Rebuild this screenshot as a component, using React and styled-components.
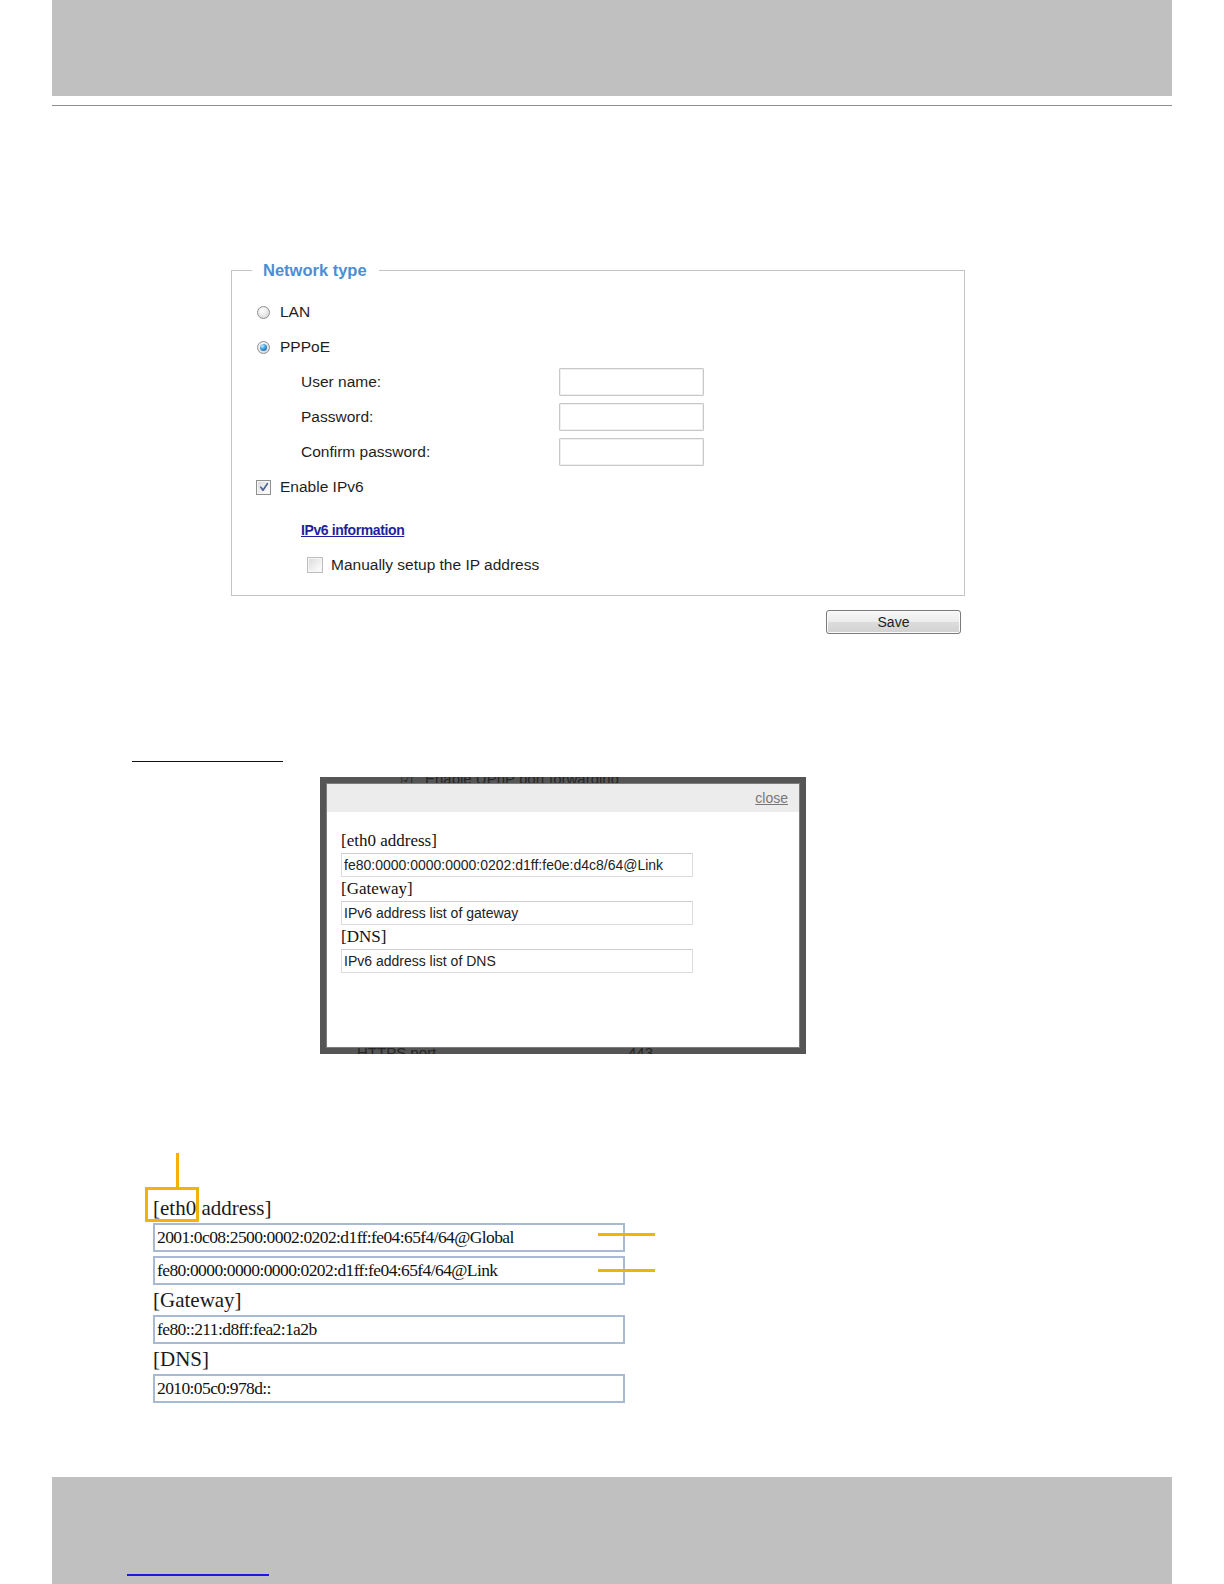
import React from 'react';
import styled, { createGlobalStyle } from 'styled-components';

const GlobalStyle = createGlobalStyle`
  html, body { margin: 0; padding: 0; background: #fff; }
  body { font-family: "Liberation Sans", Arial, sans-serif; color: #222; }
  * { box-sizing: border-box; }
`;

const Page = styled.div`
  width: 1224px;
  height: 1584px;
  display: flex;
  flex-direction: column;
  overflow: hidden;
`;

const Header = styled.div`
  flex-shrink: 0;
  margin: 0 52px;
  height: 96px;
  background: #c0c0c0;
`;

const Rule = styled.div`
  flex-shrink: 0;
  margin: 9px 52px 0;
  border-top: 1px solid #8f8f8f;
`;

const Settings = styled.section`
  flex-shrink: 0;
  margin: 154px 0 0 231px;
  width: 734px;
`;

const FieldSet = styled.fieldset`
  margin: 0;
  padding: 14.5px 0 13.5px;
  border: 1px solid #c4c4c4;
  min-width: 0;
`;

const Legend = styled.legend`
  margin-left: 20px;
  padding: 0 12px 0 11px;
  font-size: 16.5px;
  font-weight: bold;
  line-height: 20px;
  color: #4b8ed6;
`;

const Row = styled.div`
  height: ${(p) => p.$h || 35}px;
  display: flex;
  align-items: center;
  padding-left: ${(p) => p.$indent}px;
  margin-top: ${(p) => p.$mt || 0}px;
  font-size: 15.5px;
  color: #1e1e1e;
`;

const Radio = styled.span`
  flex-shrink: 0;
  width: 13px;
  height: 13px;
  border-radius: 50%;
  border: 1px solid #8e8f8f;
  background: radial-gradient(circle at 40% 35%, #ffffff 0%, #e6e6e6 55%, #cdcdcd 100%);
  margin-right: 10px;
  display: flex;
  align-items: center;
  justify-content: center;
  &::after {
    content: '';
    display: ${(p) => (p.$checked ? 'block' : 'none')};
    width: 7px;
    height: 7px;
    border-radius: 50%;
    background: radial-gradient(circle at 35% 30%, #c4f0ff 0%, #3d9bd8 45%, #17558f 100%);
  }
`;

const CheckBox = styled.span`
  flex-shrink: 0;
  width: ${(p) => p.$size}px;
  height: ${(p) => p.$size}px;
  border: 1px solid ${(p) => (p.$light ? '#bdbdbd' : '#8e8f8f')};
  background: linear-gradient(135deg, #d9d9d9 0%, #f2f2f2 60%, #ffffff 100%);
  box-shadow: inset 0 0 0 1px #f6f6f6;
  margin-right: ${(p) => p.$gap}px;
  display: flex;
  align-items: center;
  justify-content: center;
`;

const FieldLabel = styled.span`
  flex-shrink: 0;
  width: 258px;
`;

const TextBox = styled.input`
  width: 145px;
  height: 28px;
  margin: 0;
  padding: 0 3px;
  border: 1px solid #c8c8c8;
  border-radius: 1px;
  box-shadow: inset 0 0 0 1px #efefef;
  background: #fff;
  outline: none;
  font: 14px "Liberation Sans", Arial, sans-serif;
`;

const InfoLink = styled.a`
  font-size: 14px;
  font-weight: bold;
  letter-spacing: -0.4px;
  color: #1f1f9e;
  text-decoration: underline;
  cursor: pointer;
`;

const SaveBar = styled.div`
  display: flex;
  justify-content: flex-end;
  padding-right: 4px;
  margin-top: 14px;
`;

const SaveButton = styled.button`
  width: 135px;
  height: 24px;
  margin: 0;
  padding: 0;
  border: 1px solid #7a7a7a;
  border-radius: 3px;
  background: linear-gradient(#f7f7f7 0%, #ececec 50%, #dcdcdc 51%, #d2d2d2 100%);
  box-shadow: inset 0 0 0 1px #fbfbfb;
  font: 14px "Liberation Sans", Arial, sans-serif;
  color: #1e1e1e;
`;

const BlankLink = styled.div`
  flex-shrink: 0;
  margin: 127px 0 0 132px;
  width: 151px;
  border-top: 1px solid #111;
`;

const Shot = styled.div`
  flex-shrink: 0;
  position: relative;
  margin: 15px 0 0 320px;
  width: 486px;
  height: 277px;
  padding: 7px;
  background: #555;
  overflow: hidden;
`;

const Ghost = styled.span`
  position: absolute;
  z-index: 0;
  left: ${(p) => p.$left}px;
  top: ${(p) => p.$top}px;
  font-size: 15px;
  line-height: 15px;
  color: #262626;
  white-space: nowrap;
`;

const Panel = styled.div`
  position: relative;
  z-index: 1;
  height: 100%;
  background: #fff;
  box-shadow: 0 0 0 1px #7c7c7c;
  display: flex;
  flex-direction: column;
`;

const PanelHead = styled.div`
  height: 28px;
  background: #ececec;
  display: flex;
  align-items: center;
  justify-content: flex-end;
  padding-right: 11px;
`;

const CloseLink = styled.a`
  font-size: 14px;
  color: #777;
  text-decoration: underline;
`;

const PanelBody = styled.div`
  padding: 17px 0 0 14px;
  display: flex;
  flex-direction: column;
`;

const SmallLabel = styled.div`
  font-family: "Liberation Serif", "Times New Roman", serif;
  font-size: 17px;
  line-height: 24px;
  color: #111;
`;

const SmallBox = styled.input`
  width: 352px;
  height: 24px;
  margin: 0;
  padding: 0 2px;
  border: 1px solid #dcdcdc;
  border-top-color: #cfcfcf;
  background: #fff;
  outline: none;
  font: 14px "Liberation Sans", Arial, sans-serif;
  color: #222;
`;

const Figure = styled.div`
  flex-shrink: 0;
  margin: 99px 0 0 153px;
  padding-top: 40px;
  width: 472px;
  display: flex;
  flex-direction: column;
`;

const BigLabel = styled.div`
  font-family: "Liberation Serif", "Times New Roman", serif;
  font-size: 21px;
  line-height: 30px;
  color: #1a1a1a;
  white-space: nowrap;
`;

const Marked = styled.span`
  position: relative;
  display: inline-block;
  &::before {
    content: '';
    position: absolute;
    left: 23px;
    top: -40px;
    width: 3px;
    height: 34px;
    background: #f2b20a;
  }
  &::after {
    content: '';
    position: absolute;
    left: -8px;
    right: -3px;
    top: -6px;
    bottom: 1px;
    border: 3px solid #f2b20a;
  }
`;

const BigField = styled.div`
  position: relative;
  margin-top: ${(p) => p.$mt || 0}px;
  &::after {
    content: '';
    display: ${(p) => (p.$marker ? 'block' : 'none')};
    position: absolute;
    left: 445px;
    top: ${(p) => p.$markerTop || 0}px;
    width: 57px;
    height: 3px;
    background: #f2b20a;
  }
`;

const BigBox = styled.input`
  display: block;
  width: 472px;
  height: 29px;
  margin: 0;
  padding: 0 2px;
  border: 2px solid #a8bad3;
  background: #fff;
  outline: none;
  font-family: "Liberation Serif", "Times New Roman", serif;
  font-size: 17.5px;
  letter-spacing: -0.6px;
  color: #111;
`;

const Footer = styled.footer`
  flex-shrink: 0;
  margin: auto 52px 0;
  height: 107px;
  background: #c0c0c0;
  padding: 97px 0 0 75px;
`;

const FooterLink = styled.div`
  width: 142px;
  border-top: 2px solid #1a1ae0;
`;

const CheckMark = () => (
  <svg width="10" height="10" viewBox="0 0 10 10">
    <path d="M1.8 5.2 L4 8.2 L8.4 1.6" fill="none" stroke="#4a5f97" strokeWidth="1.7" strokeLinecap="round" strokeLinejoin="round" />
  </svg>
);

export default function App() {
  return (
    <Page>
      <GlobalStyle />
      <Header />
      <Rule />

      <Settings>
        <FieldSet>
          <Legend>Network type</Legend>
          <Row $indent={25}>
            <Radio />
            LAN
          </Row>
          <Row $indent={25}>
            <Radio $checked />
            PPPoE
          </Row>
          <Row $indent={69}>
            <FieldLabel>User name:</FieldLabel>
            <TextBox readOnly />
          </Row>
          <Row $indent={69}>
            <FieldLabel>Password:</FieldLabel>
            <TextBox type="password" readOnly />
          </Row>
          <Row $indent={69}>
            <FieldLabel>Confirm password:</FieldLabel>
            <TextBox type="password" readOnly />
          </Row>
          <Row $indent={24}>
            <CheckBox $size={15} $gap={9}>
              <CheckMark />
            </CheckBox>
            Enable IPv6
          </Row>
          <Row $indent={69} $mt={8}>
            <InfoLink>IPv6 information</InfoLink>
          </Row>
          <Row $indent={75} $h={34}>
            <CheckBox $size={16} $gap={8} $light />
            Manually setup the IP address
          </Row>
        </FieldSet>
        <SaveBar>
          <SaveButton>Save</SaveButton>
        </SaveBar>
      </Settings>

      <BlankLink />

      <Shot>
        <Ghost $left={80} $top={-6}>☑</Ghost>
        <Ghost $left={105} $top={-6}>Enable UPnP port forwarding</Ghost>
        <Ghost $left={37} $top={268}>HTTPS port</Ghost>
        <Ghost $left={308} $top={268}>443</Ghost>
        <Panel>
          <PanelHead>
            <CloseLink>close</CloseLink>
          </PanelHead>
          <PanelBody>
            <SmallLabel>[eth0 address]</SmallLabel>
            <SmallBox readOnly defaultValue="fe80:0000:0000:0000:0202:d1ff:fe0e:d4c8/64@Link" />
            <SmallLabel>[Gateway]</SmallLabel>
            <SmallBox readOnly defaultValue="IPv6 address list of gateway" />
            <SmallLabel>[DNS]</SmallLabel>
            <SmallBox readOnly defaultValue="IPv6 address list of DNS" />
          </PanelBody>
        </Panel>
      </Shot>

      <Figure>
        <BigLabel>
          <Marked>[eth0</Marked> address]
        </BigLabel>
        <BigField $marker $markerTop={10}>
          <BigBox readOnly defaultValue="2001:0c08:2500:0002:0202:d1ff:fe04:65f4/64@Global" />
        </BigField>
        <BigField $mt={4} $marker $markerTop={13}>
          <BigBox readOnly defaultValue="fe80:0000:0000:0000:0202:d1ff:fe04:65f4/64@Link" />
        </BigField>
        <BigLabel>[Gateway]</BigLabel>
        <BigField>
          <BigBox readOnly defaultValue="fe80::211:d8ff:fea2:1a2b" />
        </BigField>
        <BigLabel>[DNS]</BigLabel>
        <BigField>
          <BigBox readOnly defaultValue="2010:05c0:978d::" />
        </BigField>
      </Figure>

      <Footer>
        <FooterLink />
      </Footer>
    </Page>
  );
}
